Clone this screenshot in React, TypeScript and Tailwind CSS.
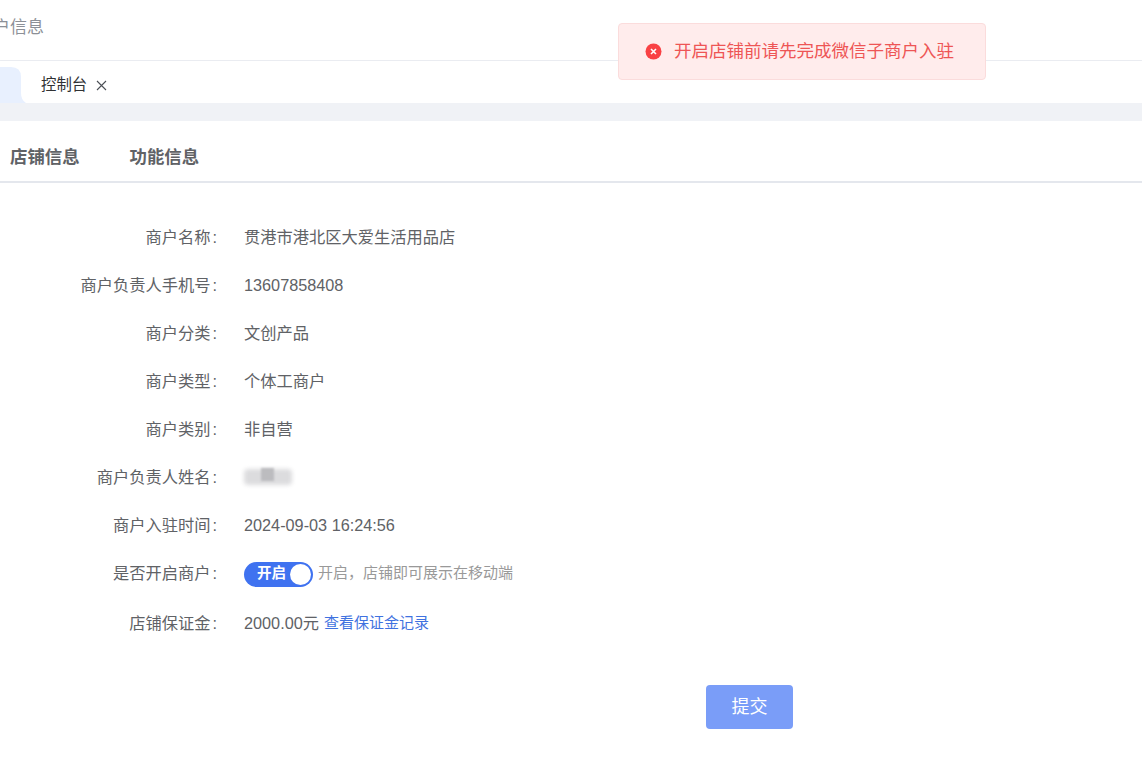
const rows = [
  ['商户名称', '贯港市港北区大爱生活用品店'],
  ['商户负责人手机号', '13607858408'],
  ['商户分类', '文创产品'],
  ['商户类型', '个体工商户'],
  ['商户类别', '非自营'],
];

function Row({ label, children, height = 'h-12' }: { label: string; children: React.ReactNode; height?: string }) {
  return (
    <div className={`flex items-center ${height}`}>
      <div className="w-[217px] shrink-0 text-right text-[#606266]">
        {label}
        <span className="ml-[2px]">:</span>
      </div>
      <div className="ml-[27px] flex items-center text-[#606266]">{children}</div>
    </div>
  );
}

export default function App() {
  return (
    <div
      className="relative h-[784px] w-[1142px] overflow-hidden bg-white text-[16.25px]"
      style={{ fontFamily: '"Liberation Sans", "Noto Sans CJK SC", sans-serif' }}
    >
      {/* header */}
      <div className="flex h-[61px] items-center border-b border-[#eceef3] pb-1">
        <span className="-ml-6 text-[17px] text-[#8c9097]">商户信息</span>
      </div>

      {/* tag bar */}
      <div className="flex h-[42px] items-stretch bg-white shadow-[0_1px_3px_rgba(0,0,0,0.06)]">
        <svg className="shrink-0" width="26" height="42" viewBox="0 0 26 42">
          <path d="M0 6 H11 Q21 6 21 16 V32 Q21 39 26 42 H0 Z" fill="#e8f0fe" />
        </svg>
        <div className="ml-[15px] flex items-center pt-[6px] text-[15.4px] text-[#303133]">
          控制台
          <svg className="ml-[9px]" width="11" height="11" viewBox="0 0 11 11" fill="none" stroke="#4b4f55" strokeWidth="1.1">
            <path d="M1 1 L10 10 M10 1 L1 10" />
          </svg>
        </div>
      </div>

      <div className="h-[18px] bg-[#f0f2f6]" />

      {/* section tabs */}
      <div className="flex h-[62px] items-start gap-[50px] border-b-2 border-[#e4e7ed] pl-[10px] pt-[23px] text-[17.4px] font-bold text-[#606266]">
        <span>店铺信息</span>
        <span>功能信息</span>
      </div>

      {/* form */}
      <div className="pt-[30px]">
        {rows.map(([label, value]) => (
          <Row key={label} label={label}>{value}</Row>
        ))}
        <Row label="商户负责人姓名">
          <div className="relative h-[20px] w-[50px]">
            <div className="absolute left-0 top-[2px] h-[16px] w-[48px] rounded-sm bg-[#dcdcde] blur-[2px]" />
            <div className="absolute left-[17px] top-[1px] h-[13px] w-[13px] bg-[#bcbcbf] blur-[1px]" />
          </div>
        </Row>
        <Row label="商户入驻时间">2024-09-03 16:24:56</Row>
        <Row label="是否开启商户">
          <div className="mt-[2px] flex h-[25px] w-[69px] items-center justify-between rounded-full bg-[#3f72f0] pl-[13px] pr-[2px]">
            <span className="text-[14.5px] font-bold text-white">开启</span>
            <span className="h-[21px] w-[21px] rounded-full bg-white" />
          </div>
          <span className="ml-[5px] text-[15px] text-[#999999]">{'开启\uFF0C店铺即可展示在移动端'}</span>
        </Row>
        <Row label="店铺保证金" height="h-[52px]">
          2000.00元
          <span className="ml-[5px] text-[15px] text-[#3f72e0]">查看保证金记录</span>
        </Row>
      </div>

      <button className="ml-[706px] mt-[36px] h-[44px] w-[87px] rounded bg-[#7a9df8] text-lg text-white">提交</button>

      {/* toast */}
      <div className="absolute left-[618px] top-[23px] flex h-[57px] w-[368px] items-center rounded border border-[#fbdcdc] bg-[#ffecec] pl-[26px] text-[17.5px] text-[#ee5555]">
        <svg width="17" height="17" viewBox="0 0 17 17">
          <circle cx="8.5" cy="8.5" r="8" fill="#f94144" />
          <path d="M6 6 L11 11 M11 6 L6 11" stroke="#ffffff" strokeWidth="1.6" />
        </svg>
        <span className="ml-[12px]">开启店铺前请先完成微信子商户入驻</span>
      </div>
    </div>
  );
}
